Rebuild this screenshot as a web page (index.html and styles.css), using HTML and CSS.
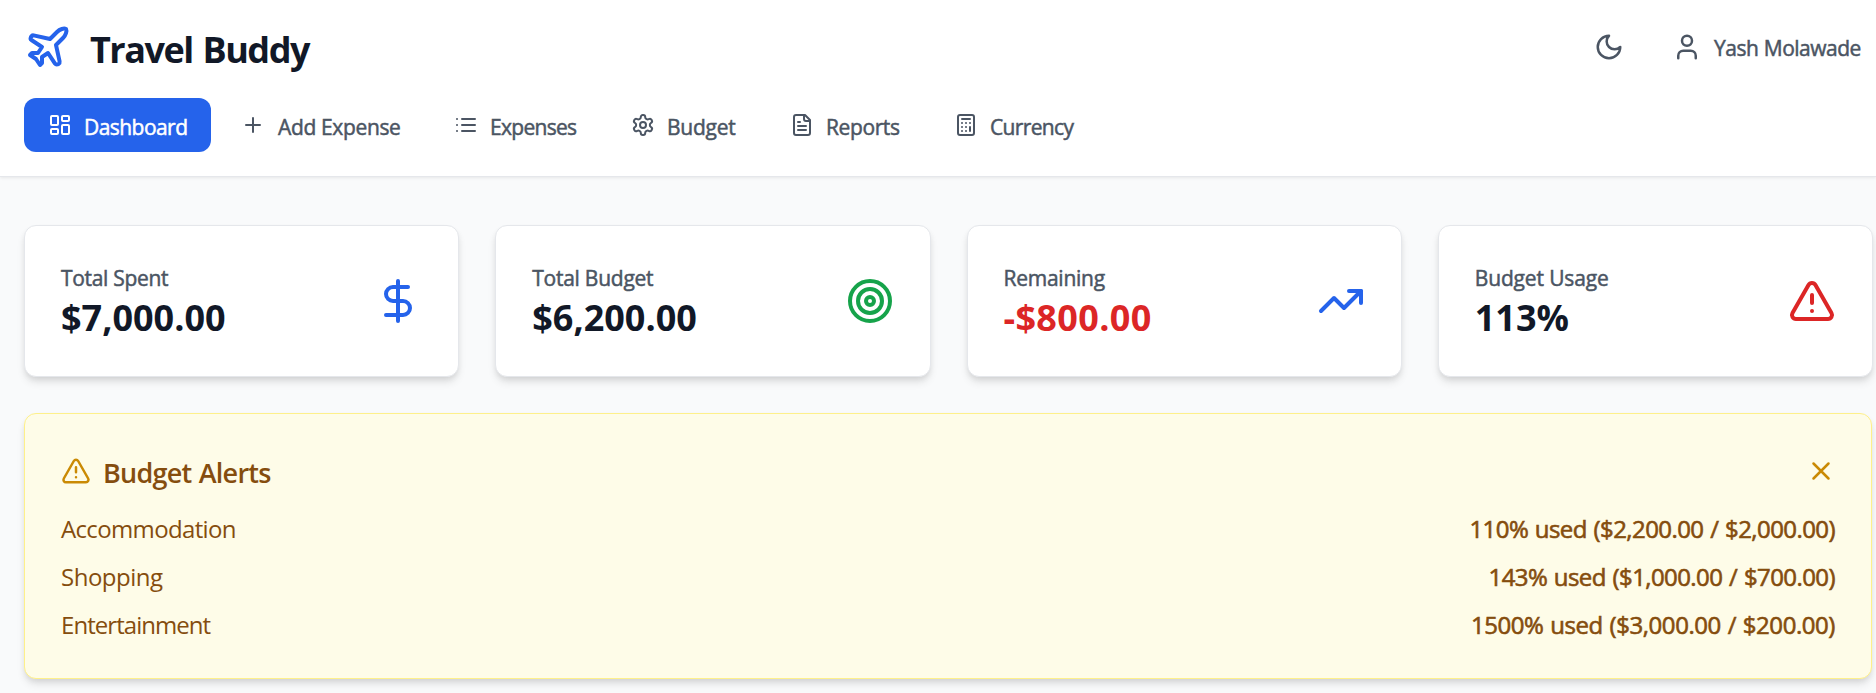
FILE: index.html
```html
<!DOCTYPE html>
<html lang="en">
<head>
<meta charset="utf-8">
<title>Travel Buddy</title>
<link rel="stylesheet" href="styles.css">
</head>
<body>
<header class="header">
  <div class="topbar">
    <div class="brand">
      <svg class="icon icon-lg blue" viewBox="0 0 24 24"><path d="M17.8 19.2 16 11l3.5-3.5C21 6 21.5 4 21 3c-1-.5-3 0-4.5 1.5L13 8 4.8 6.2c-.5-.1-.9.1-1.1.5l-.3.5c-.2.5-.1 1 .3 1.3L9 12l-2 3H4l-1 1 3 2 2 3 1-1v-3l3-2 3.5 5.3c.3.4.8.5 1.3.4l.5-.2c.4-.3.6-.7.5-1.2z"/></svg>
      <h1 class="title">Travel Buddy</h1>
    </div>
    <div class="account">
      <svg class="icon icon-md" viewBox="0 0 24 24"><path d="M12 3a6 6 0 0 0 9 9 9 9 0 1 1-9-9Z"/></svg>
      <div class="user">
        <svg class="icon icon-md" viewBox="0 0 24 24"><path d="M19 21v-2a4 4 0 0 0-4-4H9a4 4 0 0 0-4 4v2"/><circle cx="12" cy="7" r="4"/></svg>
        <span class="user-name">Yash Molawade</span>
      </div>
    </div>
  </div>
  <nav class="nav">
    <a class="tab active"><svg class="icon" viewBox="0 0 24 24"><rect width="7" height="9" x="3" y="3" rx="1"/><rect width="7" height="5" x="14" y="3" rx="1"/><rect width="7" height="9" x="14" y="12" rx="1"/><rect width="7" height="5" x="3" y="16" rx="1"/></svg><span class="label l-dashboard">Dashboard</span></a>
    <a class="tab"><svg class="icon" viewBox="0 0 24 24"><path d="M5 12h14M12 5v14"/></svg><span class="label l-add">Add Expense</span></a>
    <a class="tab"><svg class="icon" viewBox="0 0 24 24"><path d="M3 12h.01M3 18h.01M3 6h.01M8 12h13M8 18h13M8 6h13"/></svg><span class="label l-expenses">Expenses</span></a>
    <a class="tab"><svg class="icon" viewBox="0 0 24 24"><path d="M12.22 2h-.44a2 2 0 0 0-2 2v.18a2 2 0 0 1-1 1.73l-.43.25a2 2 0 0 1-2 0l-.15-.08a2 2 0 0 0-2.73.73l-.22.38a2 2 0 0 0 .73 2.73l.15.1a2 2 0 0 1 1 1.72v.51a2 2 0 0 1-1 1.74l-.15.09a2 2 0 0 0-.73 2.73l.22.38a2 2 0 0 0 2.73.73l.15-.08a2 2 0 0 1 2 0l.43.25a2 2 0 0 1 1 1.73V20a2 2 0 0 0 2 2h.44a2 2 0 0 0 2-2v-.18a2 2 0 0 1 1-1.73l.43-.25a2 2 0 0 1 2 0l.15.08a2 2 0 0 0 2.73-.73l.22-.39a2 2 0 0 0-.73-2.73l-.15-.08a2 2 0 0 1-1-1.74v-.5a2 2 0 0 1 1-1.74l.15-.09a2 2 0 0 0 .73-2.73l-.22-.38a2 2 0 0 0-2.73-.73l-.15.08a2 2 0 0 1-2 0l-.43-.25a2 2 0 0 1-1-1.73V4a2 2 0 0 0-2-2z"/><circle cx="12" cy="12" r="3"/></svg><span class="label l-budget">Budget</span></a>
    <a class="tab"><svg class="icon" viewBox="0 0 24 24"><path d="M15 2H6a2 2 0 0 0-2 2v16a2 2 0 0 0 2 2h12a2 2 0 0 0 2-2V7Z"/><path d="M14 2v4a2 2 0 0 0 2 2h4M10 9H8M16 13H8M16 17H8"/></svg><span class="label l-reports">Reports</span></a>
    <a class="tab"><svg class="icon" viewBox="0 0 24 24"><rect width="16" height="20" x="4" y="2" rx="2"/><path d="M8 6h8M16 14v4M16 10h.01M12 10h.01M8 10h.01M12 14h.01M8 14h.01M12 18h.01M8 18h.01"/></svg><span class="label l-currency">Currency</span></a>
  </nav>
</header>
<main class="main">
  <section class="stats">
    <article class="card">
      <div><p class="stat-label s-spent">Total Spent</p><p class="stat-value">$7,000.00</p></div>
      <svg class="icon icon-lg blue" viewBox="0 0 24 24"><path d="M12 2v20M17 5H9.5a3.5 3.5 0 0 0 0 7h5a3.5 3.5 0 0 1 0 7H6"/></svg>
    </article>
    <article class="card">
      <div><p class="stat-label s-budget">Total Budget</p><p class="stat-value">$6,200.00</p></div>
      <svg class="icon icon-lg green" viewBox="0 0 24 24"><circle cx="12" cy="12" r="10"/><circle cx="12" cy="12" r="6"/><circle cx="12" cy="12" r="2"/></svg>
    </article>
    <article class="card">
      <div><p class="stat-label s-remaining">Remaining</p><p class="stat-value negative">-$800.00</p></div>
      <svg class="icon icon-lg blue" viewBox="0 0 24 24"><path d="m22 7-8.500 8.500-5-5L2 17"/><path d="M16 7h6v6"/></svg>
    </article>
    <article class="card">
      <div><p class="stat-label s-usage">Budget Usage</p><p class="stat-value percent">113%</p></div>
      <svg class="icon icon-lg red" viewBox="0 0 24 24"><path d="m21.730 18-8-14a2 2 0 0 0-3.480 0l-8 14A2 2 0 0 0 4 21h16a2 2 0 0 0 1.730-3M12 9v4M12 17h.01"/></svg>
    </article>
  </section>
  <section class="alerts">
    <div class="alerts-head">
      <svg class="icon icon-md amber" viewBox="0 0 24 24"><path d="m21.730 18-8-14a2 2 0 0 0-3.480 0l-8 14A2 2 0 0 0 4 21h16a2 2 0 0 0 1.730-3M12 9v4M12 17h.01"/></svg>
      <h2 class="alerts-title">Budget Alerts</h2>
      <svg class="icon icon-md amber close" viewBox="0 0 24 24"><path d="M18 6 6 18M6 6l12 12"/></svg>
    </div>
    <div class="row"><span class="r-accommodation">Accommodation</span><span class="usage u-1">110% used ($2,200.00 / $2,000.00)</span></div>
    <div class="row"><span class="r-shopping">Shopping</span><span class="usage u-2">143% used ($1,000.00 / $700.00)</span></div>
    <div class="row"><span class="r-entertainment">Entertainment</span><span class="usage u-3">1500% used ($3,000.00 / $200.00)</span></div>
  </section>
</main>
</body>
</html>
```
FILE: styles.css
```css
* { box-sizing: border-box; margin: 0; padding: 0; }
body {
  min-height: 693px;
  background: #f9fafb;
  color: #111827;
  font-family: "Open Sans", "Noto Sans", sans-serif;
  overflow: hidden;
}
.icon {
  width: 24px; height: 24px; flex: none; display: block;
  fill: none; stroke: currentColor; stroke-width: 2;
  stroke-linecap: round; stroke-linejoin: round;
}
.icon-md { width: 30px; height: 30px; }
.icon-lg { width: 48px; height: 48px; }
.blue { color: #2563eb; }
.green { color: #16a34a; }
.red { color: #dc2626; }
.amber { color: #ca8a04; }

.header {
  height: 177px;
  padding: 0 15px 0 24px;
  background: #fff;
  border-bottom: 1px solid #e5e7eb;
  box-shadow: 0 1px 3px rgba(0, 0, 0, .08);
}
.topbar { height: 98px; padding-top: 23px; display: flex; justify-content: space-between; }
.brand { display: flex; gap: 18px; }
.title { font-size: 36px; line-height: 53px; font-weight: 700; letter-spacing: -1.5px; word-spacing: 2px; white-space: nowrap; }
.account { display: flex; gap: 48px; height: 48px; align-items: center; color: #4b5563; }
.user { display: flex; gap: 12px; align-items: center; }
.user-name { width: 147px; padding-top: 2px; font-size: 21px; line-height: 30px; letter-spacing: -.5px; word-spacing: .5px; white-space: nowrap; }
.nav { display: flex; gap: 6px; }
.tab {
  display: flex; gap: 12px; height: 54px; padding: 15px 24px;
  border-radius: 12px; color: #4b5563;
  font-size: 21px;
}
.tab.active { background: #2563eb; color: #fff; }
.label { line-height: 28px; white-space: nowrap; }
/* medium weight, between regular and semibold */
.label, .user-name, .stat-label { -webkit-text-stroke: .5px currentColor; }
.l-dashboard { width: 103px; letter-spacing: -.55px; }
.l-add { width: 123px; padding-left: 1px; letter-spacing: -.35px; }
.l-expenses { width: 87px; letter-spacing: -.7px; }
.l-budget { width: 69px; letter-spacing: -.25px; }
.l-reports { width: 74px; letter-spacing: -.4px; }
.l-currency { width: 86px; letter-spacing: -.65px; }

.main { width: 1873px; padding: 48px 0 0 24px; }
.stats { display: grid; grid-template-columns: repeat(4, 1fr); gap: 36px; }
.card {
  height: 152px; padding: 0 36px;
  display: flex; align-items: center; justify-content: space-between;
  background: #fff; border: 1px solid #e5e7eb; border-radius: 12px;
  box-shadow: 0 6px 9px -1px rgba(0, 0, 0, .1), 0 3px 6px -2px rgba(0, 0, 0, .1);
}
.stat-label { padding-top: 3px; font-size: 21px; line-height: 30px; color: #4b5563; white-space: nowrap; }
.s-spent { letter-spacing: -.32px; }
.s-budget { letter-spacing: -.25px; }
.s-remaining { letter-spacing: -.25px; }
.s-usage { letter-spacing: -.15px; }
.stat-value { font-size: 36px; line-height: 50px; font-weight: 700; white-space: nowrap; }
.negative { color: #dc2626; letter-spacing: .35px; }
.alerts {
  width: 1848px; height: 266px; margin-top: 36px; padding: 42px 35px 0 36px;
  background: #fefce8; border: 1px solid #fef08a; border-radius: 12px;
  box-shadow: 0 6px 9px -1px rgba(0, 0, 0, .1), 0 3px 6px -2px rgba(0, 0, 0, .1);
  color: #854d0e;
}
.alerts-head { display: flex; height: 55px; }
.alerts-title { margin-left: 12px; font-size: 27px; line-height: 33px; font-weight: 600; letter-spacing: -.75px; word-spacing: 1px; white-space: nowrap; }
.close { margin-left: auto; }
.row { display: flex; justify-content: space-between; height: 36px; margin-bottom: 12px; font-size: 24px; line-height: 36px; white-space: nowrap; }
.r-accommodation { letter-spacing: -.65px; }
.r-shopping { letter-spacing: -.5px; }
.r-entertainment { letter-spacing: -.95px; }
.usage { padding-right: 1px; word-spacing: 1px; -webkit-text-stroke: .6px currentColor; }
.u-1 { letter-spacing: -.57px; }
.u-2 { letter-spacing: -.58px; }
.u-3 { letter-spacing: -.44px; }
```
